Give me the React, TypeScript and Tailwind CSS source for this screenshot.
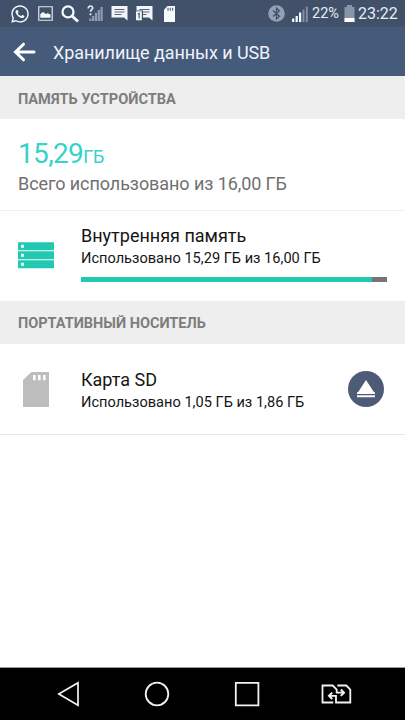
import type { ReactNode } from 'react'
import { FaWhatsapp } from 'react-icons/fa'

const USED_GB = 15.29
const TOTAL_GB = 16

function SectionHeader({ children, className }: { children: ReactNode; className: string }) {
  return (
    <h2 className={`flex items-center bg-[#eeeeee] pl-[18px] font-bold text-[#7d7d7d] ${className}`}>
      {children}
    </h2>
  )
}

function ChatIcon({ badge = false }: { badge?: boolean }) {
  return (
    <svg width="17" height="15" viewBox="0 0 17 15">
      <path d="M.5 0h16v14.5L13 11.5H.5z" fill="#f2f6fb" />
      <path d="M3.5 3.5h10M3.5 6h10M3.5 8.5h7" stroke="#56647c" strokeWidth="1" />
      {badge && (
        <>
          <path d="M-.5 4.5h7.5V15h-7.5z" fill="#42516a" />
          <path d="M0 5.3h5.8v9H0z" fill="#f2f6fb" />
          <path d="M1.8 8.2l1.4-.8v5" fill="none" stroke="#43516b" strokeWidth="1.1" />
        </>
      )}
    </svg>
  )
}

function StatusBar() {
  return (
    <div className="flex h-[27px] items-center bg-[#42516a] pl-[10px] text-[#e6edf6]">
      <FaWhatsapp size={20} className="text-[#f2f6fb]" />
      <svg className="ml-[8px]" width="15" height="15" viewBox="0 0 15 15">
        <path d="M.75.75h13.5v13.5H.75z" fill="none" stroke="#dfe6ef" strokeWidth="1.2" />
        <path d="M2.3 11.8V8.2l2-1.9 1.8.3 1.4 1.5 2.2-.9 2.8 1.2v3.4z" fill="#f7fafd" />
      </svg>
      <svg className="ml-[8px]" width="19" height="18" viewBox="0 0 19 18">
        <circle cx="7" cy="6.9" r="5.5" fill="none" stroke="#f7fafd" strokeWidth="2.3" />
        <path d="M11 11l6 5.5" stroke="#f7fafd" strokeWidth="3" />
      </svg>
      <svg className="ml-[7px]" width="16" height="17" viewBox="0 0 16 17">
        <path d="M3.4 16v-2.5M6.2 16v-5M9 16V8M11.8 16V5M14.6 16V2" stroke="#909db1" strokeWidth="2.2" />
        <path d="M1.2 3.6C1.3 .1 6 .3 5.6 3.1 5.4 4.6 3.5 4.8 3.5 6.8" fill="none" stroke="#dfe6ef" strokeWidth="1.7" />
        <circle cx="3.5" cy="9.3" r="1.1" fill="#dfe6ef" />
      </svg>
      <span className="ml-[8px] flex gap-[8px]">
        <ChatIcon />
        <ChatIcon badge />
      </span>
      <svg className="ml-[11px]" width="12" height="16" viewBox="0 0 12 16">
        <path d="M3.5 0H11v16H0V3.8z" fill="#f7fafd" />
        <path d="M4 1.8v3M6.3 1.8v3M8.6 1.8v3" stroke="#5c6a80" strokeWidth="1.2" />
      </svg>
      <svg className="ml-[92px]" width="17" height="17" viewBox="0 0 17 17">
        <circle cx="8.5" cy="8.5" r="8.3" fill="#95a1b3" />
        <path d="M5 5.4l6.5 5.8-3 2.7V3.1l3 2.7L5 11.6" fill="none" stroke="#42516a" strokeWidth="1.3" />
      </svg>
      <svg className="ml-[7px]" width="16" height="16" viewBox="0 0 16 16">
        <path d="M1.2 16v-3.5M4.7 16v-6M8.1 16V6.5" stroke="#f7fafd" strokeWidth="2.2" />
        <path d="M11.5 16V3.5M14.8 16V.5" stroke="#8290a5" strokeWidth="1.9" />
      </svg>
      <span className="ml-[4px] w-[28px] pt-px text-[14.5px] whitespace-nowrap">22%</span>
      <svg className="ml-[4px]" width="11" height="17" viewBox="0 0 11 17">
        <path d="M3 0h5v2h2.5v15H.5V2H3z" fill="#8995a9" />
        <path d="M.5 13h10v4H.5z" fill="#ffffff" />
      </svg>
      <span className="ml-[3px] pt-px text-[16px] whitespace-nowrap">23:22</span>
    </div>
  )
}

function AppBar() {
  return (
    <header className="flex h-[49px] items-center bg-[#465a7a] pl-[13px] text-white">
      <svg width="23" height="20" viewBox="0 0 23 20">
        <path
          d="M21 10H3M10.5 2.2L2.5 10l8 7.8"
          fill="none"
          stroke="#ffffff"
          strokeWidth="3"
          strokeLinecap="round"
        />
      </svg>
      <h1 className="ml-[17px] pt-px text-[18px] tracking-[-0.08px] text-[#eef3fa]">Хранилище данных и USB</h1>
    </header>
  )
}

function StorageIcon() {
  return (
    <svg width="36" height="27" viewBox="0 0 36 27">
      <path d="M0 .3h36v8H0zM0 9.3h36v8H0zM0 18.3h36v8H0z" fill="#20c9b0" />
      <path d="M3 2.8h3v3H3zM3 11.8h3v3H3zM3 20.8h3v3H3z" fill="#e4fffa" />
    </svg>
  )
}

function SdCardIcon() {
  return (
    <svg width="26" height="35" viewBox="0 0 26 35">
      <path d="M8.5 0H26v35H0V8z" fill="#bdbdbd" />
      <path d="M10 3h2.6v5.2H10zM15 3h2.6v5.2H15zM20 3h2.6v5.2H20z" fill="#ffffff" />
    </svg>
  )
}

function NavBar() {
  return (
    <nav className="flex h-[53px] items-center border-t border-[#999999] bg-black pl-[57px]">
      <svg width="24" height="26" viewBox="0 0 24 26">
        <path d="M21 1.7v22.6L1.8 13z" fill="none" stroke="#f2f2f2" strokeWidth="1.7" />
      </svg>
      <svg className="ml-[63px]" width="26" height="26" viewBox="0 0 26 26">
        <circle cx="13" cy="13" r="11.3" fill="none" stroke="#f2f2f2" strokeWidth="1.8" />
      </svg>
      <svg className="ml-[64px]" width="26" height="26" viewBox="0 0 26 26">
        <path d="M1.8 1.8h22.6v22.6H1.8z" fill="none" stroke="#f2f2f2" strokeWidth="1.8" />
      </svg>
      <svg className="ml-[61px]" width="31" height="20" viewBox="0 0 31 20">
        <g fill="none" stroke="#f2f2f2" strokeWidth="1.8">
          <path d="M12.3 18.5H1.5v-17h10.2l4 4v3.2h7" />
          <path d="M16.3 1.5h9l4 4v13H15v-6.7H8" />
          <path d="M19.8 5.5L23 8.7l-3.2 3.2M11.2 8.6L8 11.8l3.2 3.2" strokeWidth="2" />
        </g>
      </svg>
    </nav>
  )
}

export default function App() {
  return (
    <div className="flex h-[720px] w-[405px] flex-col overflow-hidden bg-white font-[Roboto,sans-serif] text-[#151515]">
      <StatusBar />
      <AppBar />

      <SectionHeader className="h-[43px] pt-[4px] text-[14.6px]">ПАМЯТЬ УСТРОЙСТВА</SectionHeader>
      <div className="h-[92px] border-b border-[#eeeeee] pt-[17px] pl-[18px]">
        <p className="text-[28px] leading-[36px] tracking-[-0.65px] text-[#35d3c9]">
          15,29<span className="text-[18px] tracking-[-0.2px]">ГБ</span>
        </p>
        <p className="-mt-[3px] text-[18px] leading-[24px] tracking-[-0.08px] text-[#707070]">
          Всего использовано из 16,00 ГБ
        </p>
      </div>

      <div className="flex h-[90px] pl-[18px]">
        <div className="w-[63px] pt-[31px]">
          <StorageIcon />
        </div>
        <div className="w-[306px] pt-[13px]">
          <p className="text-[18px] leading-[24px]">Внутренняя память</p>
          <p className="text-[14.6px] leading-[20px]">Использовано 15,29 ГБ из 16,00 ГБ</p>
          <div className="mt-[9px] h-[5px] bg-[#757575]">
            <div className="h-full bg-[#20c9b0]" style={{ width: `${(USED_GB / TOTAL_GB) * 100 - 0.6}%` }} />
          </div>
        </div>
      </div>

      <SectionHeader className="h-[43px] pt-[2px] text-[14.5px]">ПОРТАТИВНЫЙ НОСИТЕЛЬ</SectionHeader>
      <div className="flex h-[91px] border-b border-[#e8e8e8] pl-[23px]">
        <div className="w-[58px] pt-[28px]">
          <SdCardIcon />
        </div>
        <div className="w-[267px] pt-[24px]">
          <p className="text-[18px] leading-[24px]">Карта SD</p>
          <p className="text-[14.6px] leading-[20px]">Использовано 1,05 ГБ из 1,86 ГБ</p>
        </div>
        <button className="mt-[27px] flex size-[36px] items-center justify-center rounded-full bg-[#4d5b77]">
          <svg width="18" height="18" viewBox="0 0 18 18">
            <path d="M9 0l8 12.3h1v1.7H0v-1.7h1zM0 15.2h18v2H0z" fill="#ffffff" />
          </svg>
        </button>
      </div>

      <div className="flex-1" />
      <NavBar />
    </div>
  )
}
